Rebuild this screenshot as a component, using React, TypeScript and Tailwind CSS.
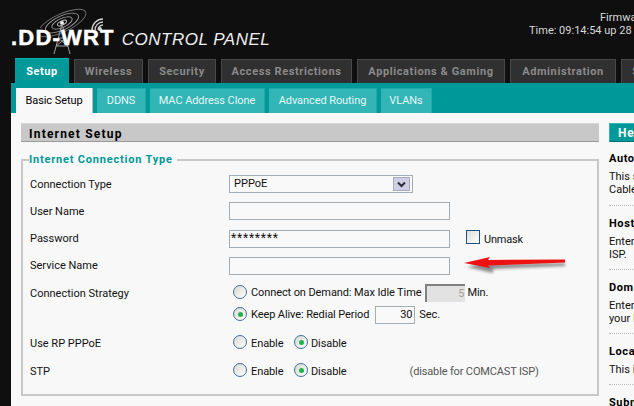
import React from "react";

function Radio({ on }: { on?: boolean }) {
  return (
    <span className="inline-flex w-[14px] h-[14px] rounded-full border-[1.5px] border-[#3f6f9f] bg-gradient-to-br from-[#d8d8d0] to-white items-center justify-center shrink-0 relative -top-[1px]">
      {on && <span className="block w-[5px] h-[5px] rounded-full bg-[#22b14c]" />}
    </span>
  );
}

function Field({ label, children, cls, lab }: { label: string; children: React.ReactNode; cls: string; lab?: string }) {
  return (
    <div className={`flex items-center ${cls}`}>
      <div className={`w-[199px] shrink-0 ${lab ?? ""}`}>{label}</div>
      {children}
    </div>
  );
}

const box = "h-[18px] border border-[#a5acb2] bg-[#f9f9f9]";

function Tab({ label, w, active }: { label: string; w: string; active?: boolean }) {
  return (
    <div
      className={`${w} shrink-0 flex items-center justify-center font-bold text-[11px] pt-[2px] ${
        active
          ? "h-[25px] bg-[#009999] text-white border-t border-[#00b3b3] tracking-[0.5px]"
          : "h-[24px] bg-[#303030] text-[#8a8a8a] border-t border-l border-r border-[#484848] tracking-[0.6px]"
      }`}
    >
      {label}
    </div>
  );
}

function Sub({ label, w, active }: { label: string; w: string; active?: boolean }) {
  return (
    <div
      className={`${w} h-[25px] shrink-0 flex items-center justify-center text-[11px] pt-[1px] tracking-[-0.08px] ${
        active ? "bg-[#f8f8f8] text-black border-r border-[#bbbbbb]" : "bg-[#33b5b5] text-[#e4f7f7] border-t border-r border-[#22aaaa]"
      }`}
    >
      {label}
    </div>
  );
}

function Help({ title, lines, cls }: { title: string; lines: string[]; cls: string }) {
  return (
    <div className={cls}>
      <div className="font-bold text-black h-[17px] leading-[17px] text-[11px] tracking-[0.6px] whitespace-nowrap">{title}</div>
      <div className="leading-[13px] whitespace-nowrap mt-[3px]">
        {lines.map((l) => (
          <div key={l}>{l}</div>
        ))}
      </div>
    </div>
  );
}

function Dots() {
  return <div className="border-t border-dotted border-[#bbb]" />;
}

export default function App() {
  return (
    <div
      className="w-[634px] h-[406px] overflow-hidden bg-[#0f0f0f] text-[11px] text-[#111] relative"
      style={{ fontFamily: '"Roboto","Liberation Sans",sans-serif' }}
    >
      {/* header */}
      <div className="h-[58px] flex relative">
        <div className="w-[300px] shrink-0 pl-[11px] pt-[26px] flex items-baseline relative">
          <svg className="absolute left-[40px] top-[8px]" width="70" height="48" viewBox="0 0 70 48" fill="none">
            <g stroke="#9a9a9a" strokeWidth="0.9">
              <ellipse cx="22" cy="15" rx="26" ry="9" transform="rotate(-25 22 15)" opacity=".7" />
              <ellipse cx="22" cy="15" rx="18" ry="7" transform="rotate(-25 22 15)" />
              <ellipse cx="22" cy="15" rx="11" ry="4.5" transform="rotate(-25 22 15)" />
              <ellipse cx="22" cy="15" rx="5" ry="2" transform="rotate(-25 22 15)" stroke="#ccc" />
            </g>
            <circle cx="22" cy="15" r="2" fill="#eee" />
            <path d="M22 16 L14 46 M22 16 L30 46 M18 30 H26 M16 38 H28 M18 30 L28 38 M26 30 L16 38" stroke="#a0a0a0" strokeWidth="1" />
            <g stroke="#d0d0d0" strokeWidth="1.3">
              <path d="M58 22 A5 5 0 0 1 63 17" />
              <path d="M55 22 A8 8 0 0 1 63 14" />
              <path d="M52 22 A11 11 0 0 1 63 11" />
            </g>
            <circle cx="60" cy="21" r="2" fill="#d0d0d0" />
          </svg>
          <span className="relative font-black text-white text-[22px] leading-[24px] tracking-[1.2px] whitespace-nowrap" style={{ fontFamily: '"Liberation Sans",sans-serif', WebkitTextStroke: "0.5px white" }}>
            .DD-WRT
          </span>
          <span className="relative ml-[7px] italic text-[#eeeeee] text-[17px] leading-[24px] tracking-[0.5px] whitespace-nowrap" style={{ fontFamily: '"Liberation Sans",sans-serif' }}>
            CONTROL PANEL
          </span>
        </div>
        <div className="text-[#d8d8d8] leading-[13px] pt-[11px] whitespace-nowrap">
          <div className="ml-[300px]">Firmware: DD-WRT v24-sp2 std</div>
          <div className="ml-[229px]">Time: 09:14:54 up 28 days</div>
        </div>
      </div>

      {/* main tabs */}
      <div className="h-[25px] flex items-end gap-[5px] pl-[15px]">
        <Tab label="Setup" w="w-[54px]" active />
        <Tab label="Wireless" w="w-[69px]" />
        <Tab label="Security" w="w-[68px]" />
        <Tab label="Access Restrictions" w="w-[131px]" />
        <Tab label="Applications & Gaming" w="w-[148px]" />
        <Tab label="Administration" w="w-[106px]" />
        <Tab label="Services" w="w-[70px]" />
      </div>

      {/* sub tabs */}
      <div className="ml-[11px] h-[30px] bg-[#009999] flex items-end gap-[4px] pl-[5px]">
        <Sub label="Basic Setup" w="w-[77px]" active />
        <Sub label="DDNS" w="w-[49px]" />
        <Sub label="MAC Address Clone" w="w-[115px]" />
        <Sub label="Advanced Routing" w="w-[108px]" />
        <Sub label="VLANs" w="w-[51px]" />
      </div>

      {/* content */}
      <div className="ml-[11px] h-[293px] bg-[#f8f8f8] flex pt-[10px] pl-[10px]">
        <div className="w-[578px] shrink-0">
          <div className="h-[19px] bg-[#c8c8c8] border-t border-[#d8d8d8] border-b border-b-[#9a9a9a] pl-[8px] pt-[2px] flex items-center font-bold text-black text-[12px] tracking-[1.2px]">
            Internet Setup
          </div>
          <fieldset className="mt-[11px] h-[243px] border-2 border-[#c8c8c8] pl-[7px] pr-[7px] m-0">
            <legend className="font-bold text-[#009999] text-[11px] tracking-[0.8px] -ml-[1px] pr-[4px] leading-[14px]">
              Internet Connection Type
            </legend>
            <Field label="Connection Type" cls="h-[18px] mt-[8px]" lab="pt-[2px]">
              <div className={`${box} w-[184px] flex items-center justify-between pl-[4px] pr-[2px]`}>
                <span className="pt-[1px]">PPPoE</span>
                <span className="w-[17px] h-[14px] bg-[#cfcfe0] border border-[#a8a8c0] flex items-center justify-center">
                  <svg width="9" height="7" viewBox="0 0 9 7"><path d="M1 1.5 L4.5 5 L8 1.5" fill="none" stroke="#2a2a3a" strokeWidth="2" /></svg>
                </span>
              </div>
            </Field>
            <Field label="User Name" cls="h-[18px] mt-[9px]" lab="pt-[2px]">
              <div className={`${box} w-[221px]`} />
            </Field>
            <Field label="Password" cls="h-[18px] mt-[10px]">
              <div className={`${box} w-[221px] pl-[1px] pt-[1px] leading-[13px] text-[12px] tracking-[0.8px]`}>********</div>
              <span className="ml-[16px] w-[14px] h-[14px] border-[1.5px] border-[#1c5180] bg-gradient-to-br from-[#dcdcd7] to-white relative -top-[2px]" />
              <span className="ml-[4px] relative top-[1px] tracking-[-0.2px]">Unmask</span>
            </Field>
            <Field label="Service Name" cls="h-[18px] mt-[9px]">
              <div className={`${box} w-[221px]`} />
            </Field>
            <div className="flex mt-[8px]">
              <div className="w-[199px] shrink-0 pt-[2px] leading-[18px]">Connection Strategy</div>
              <div className="pl-[4px] tracking-[-0.1px]">
                <div className="h-[20px] flex items-center gap-[4px]">
                  <Radio />
                  <span>Connect on Demand: Max Idle Time</span>
                  <span className="w-[40px] h-[18px] bg-[#e2e2e2] border-t-2 border-l-2 border-[#808080] text-right pr-[1px] text-[#a0a090] leading-[15px]">5</span>
                  <span className="-ml-[2px]">Min.</span>
                </div>
                <div className="h-[20px] mt-[2px] flex items-center gap-[4px]">
                  <Radio on />
                  <span className="pt-[1px] mr-[2px]">Keep Alive: Redial Period</span>
                  <span className={`${box} w-[40px] text-right pr-[2px] leading-[15px]`}>30</span>
                  <span className="pt-[1px]">Sec.</span>
                </div>
              </div>
            </div>
            <div className="flex items-center h-[18px] mt-[9px]">
              <div className="w-[199px] shrink-0 pt-[2px]">Use RP PPPoE</div>
              <div className="pl-[4px] flex items-center gap-[4px] tracking-[-0.1px]">
                <Radio /><span className="w-[39px] pt-[2px]">Enable</span><Radio on /><span className="pt-[2px] -ml-[1px]">Disable</span>
              </div>
            </div>
            <div className="flex items-center h-[18px] mt-[10px]">
              <div className="w-[199px] shrink-0 pt-[2px]">STP</div>
              <div className="pl-[4px] flex items-center gap-[4px] tracking-[-0.1px]">
                <Radio /><span className="w-[39px] pt-[2px]">Enable</span><Radio on /><span className="pt-[2px] -ml-[1px]">Disable</span>
                <span className="ml-[59px] pt-[2px] text-[#555] tracking-[-0.15px]">(disable for COMCAST ISP)</span>
              </div>
            </div>
          </fieldset>
        </div>

        <div className="ml-[10px] w-[200px] shrink-0">
          <div className="h-[19px] bg-[#009999] border-t border-l border-[#33b5b5] border-b border-b-[#006f6f] pl-[8px] pt-[1px] flex items-center font-bold text-white text-[12px] tracking-[0.9px]">
            Help
          </div>
          <div className="mt-[8px]">
            <Help title="Auto-configuration" lines={["This setting is most commonly", "Cable operators."]} cls="h-[55px]" />
            <Dots />
            <Help title="Host Name" lines={["Enter the host name provided by", "ISP."]} cls="mt-[9px] h-[54px]" />
            <Dots />
            <Help title="Domain Name" lines={["Enter the domain name provided by", "your ISP."]} cls="mt-[9px] h-[54px]" />
            <Dots />
            <Help title="Local IP Address" lines={["This is the router's address."]} cls="mt-[9px] h-[41px]" />
            <Dots />
            <Help title="Subnet Mask" lines={["This is the router's mask."]} cls="mt-[9px] h-[54px]" />
          </div>
        </div>
      </div>

      {/* red annotation arrow */}
      <svg className="absolute left-[460px] top-[250px]" width="112" height="28" viewBox="0 0 112 28">
        <defs>
          <filter id="arrowShadow" x="-20%" y="-80%" width="140%" height="260%">
            <feGaussianBlur stdDeviation="1.5" />
          </filter>
        </defs>
        <path d="M6 14 L32 8 L30 11 L104 10 L104 13 L32 16 L32 20 Z" fill="#333" opacity=".55" filter="url(#arrowShadow)" transform="translate(1 3)" />
        <path d="M4 13 L30 7 L28 10 L105 9.5 L105 12.5 L28 15.5 L30 18 Z" fill="#ee1111" />
      </svg>
    </div>
  );
}
